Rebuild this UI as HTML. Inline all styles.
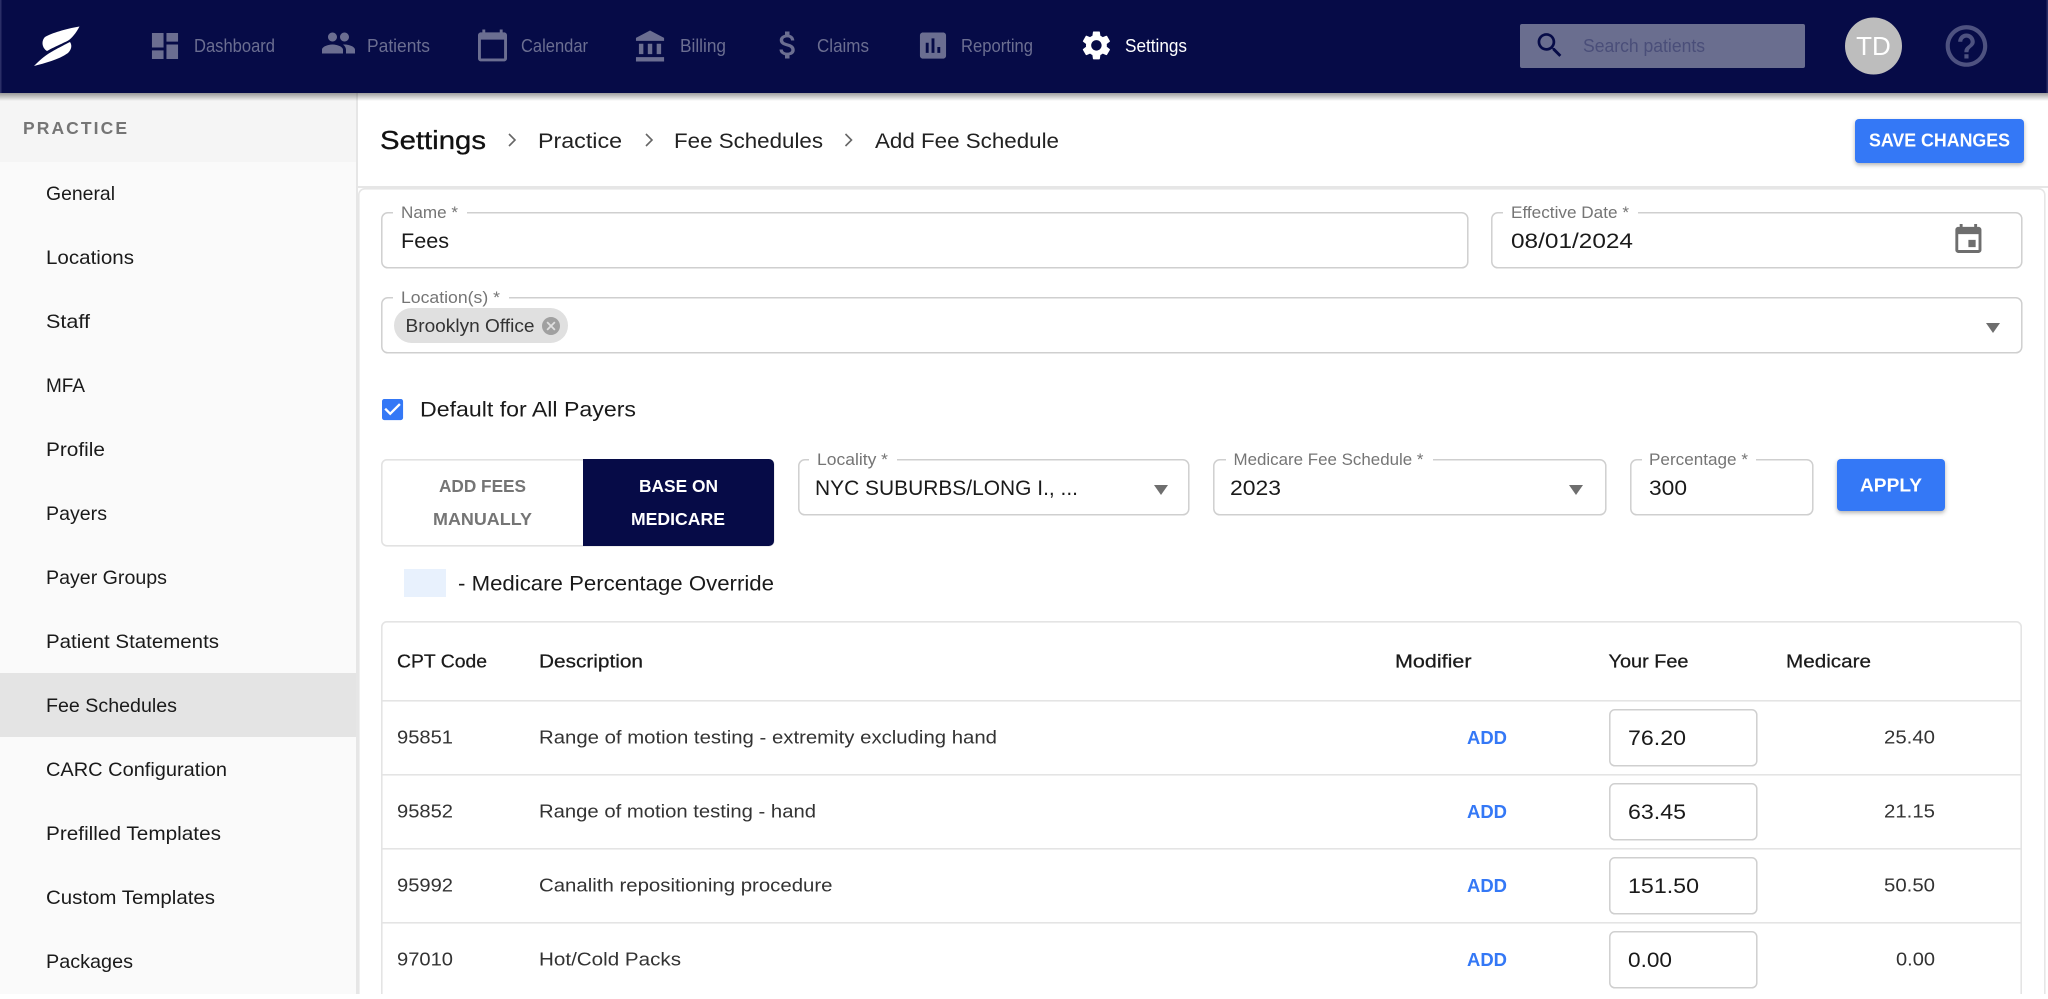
<!DOCTYPE html>
<html><head><meta charset="utf-8"><title>Add Fee Schedule</title>
<style>
html,body{margin:0;padding:0;background:#fff;width:2048px;height:999px;overflow:hidden}
svg{display:block;position:absolute;left:0;top:0}
text{font-family:"Liberation Sans",sans-serif;fill:#1c1c1c}
.nav{font-size:18px;fill:#6b6e91}
.side{font-size:19.5px;fill:#1a1a1a}
.lab{font-size:17px;fill:#757575}
.val{font-size:21px;fill:#1a1a1a}
.crumb{font-size:21px;fill:#222}
.th{font-size:18.5px;fill:#1a1a1a;stroke:#1a1a1a;stroke-width:.25}
.td{font-size:18.5px;fill:#333}
.add{font-size:18.5px;font-weight:bold;fill:#3478f6}
.f{fill:#fff;stroke:#cfcfcf;stroke-width:1.5}
.tg{font-size:17.5px;font-weight:bold}
.g{fill:#6b6e91}
</style></head><body>
<svg width="2048" height="999" viewBox="0 0 2048 999" xmlns="http://www.w3.org/2000/svg">
<defs>
<linearGradient id="sh" x1="0" y1="0" x2="0" y2="1"><stop offset="0" stop-color="#000" stop-opacity=".38"/><stop offset="1" stop-color="#000" stop-opacity="0"/></linearGradient>
</defs>
<rect width="2048" height="999" fill="#fff"/>
<!-- sidebar -->
<rect x="0" y="93" width="356" height="901" fill="#fafafa"/>
<rect x="0" y="93" width="356" height="69" fill="#f5f5f5"/>
<rect x="0" y="673" width="356" height="64" fill="#e4e4e4"/>
<rect x="356" y="93" width="2" height="901" fill="#e6e6e6"/>
<text x="23" y="134" font-size="17.5" font-weight="bold" style="fill:#757575" textLength="104" lengthAdjust="spacing">PRACTICE</text>
<text class="side" x="46" y="200" textLength="69" lengthAdjust="spacingAndGlyphs">General</text>
<text class="side" x="46" y="264" textLength="88" lengthAdjust="spacingAndGlyphs">Locations</text>
<text class="side" x="46" y="328" textLength="44" lengthAdjust="spacingAndGlyphs">Staff</text>
<text class="side" x="46" y="392" textLength="39" lengthAdjust="spacingAndGlyphs">MFA</text>
<text class="side" x="46" y="456" textLength="59" lengthAdjust="spacingAndGlyphs">Profile</text>
<text class="side" x="46" y="520" textLength="61" lengthAdjust="spacingAndGlyphs">Payers</text>
<text class="side" x="46" y="584" textLength="121" lengthAdjust="spacingAndGlyphs">Payer Groups</text>
<text class="side" x="46" y="648" textLength="173" lengthAdjust="spacingAndGlyphs">Patient Statements</text>
<text class="side" x="46" y="712" textLength="131" lengthAdjust="spacingAndGlyphs">Fee Schedules</text>
<text class="side" x="46" y="776" textLength="181" lengthAdjust="spacingAndGlyphs">CARC Configuration</text>
<text class="side" x="46" y="840" textLength="175" lengthAdjust="spacingAndGlyphs">Prefilled Templates</text>
<text class="side" x="46" y="904" textLength="169" lengthAdjust="spacingAndGlyphs">Custom Templates</text>
<text class="side" x="46" y="968" textLength="87" lengthAdjust="spacingAndGlyphs">Packages</text>

<!-- title bar -->
<rect x="358" y="186" width="1690" height="2" fill="#e6e6e6"/>
<rect x="358.8" y="188.8" width="1686" height="830" rx="6" fill="#fff" stroke="#e6e6e6" stroke-width="1.6"/>
<text x="380" y="149" font-size="26" font-weight="500" style="fill:#111;stroke:#111;stroke-width:.3" textLength="106" lengthAdjust="spacingAndGlyphs">Settings</text>
<path d="M509 134l6 6-6 6" fill="none" stroke="#666" stroke-width="1.6"/>
<text class="crumb" x="538" y="148" textLength="84" lengthAdjust="spacingAndGlyphs">Practice</text>
<path d="M646 134l6 6-6 6" fill="none" stroke="#666" stroke-width="1.6"/>
<text class="crumb" x="674" y="148" textLength="149" lengthAdjust="spacingAndGlyphs">Fee Schedules</text>
<path d="M845.500 134l6 6-6 6" fill="none" stroke="#666" stroke-width="1.6"/>
<text class="crumb" x="875" y="148" textLength="184" lengthAdjust="spacingAndGlyphs">Add Fee Schedule</text>
<rect x="1855" y="119" width="169" height="44" rx="4" fill="#3478f6" style="filter:drop-shadow(0 2px 2px rgba(0,0,0,.3))"/>
<text x="1869" y="146.500" font-size="18" font-weight="bold" style="fill:#fff" textLength="141" lengthAdjust="spacingAndGlyphs">SAVE CHANGES</text>

<!-- name/date -->
<rect class="f" x="381.800" y="212.800" width="1086" height="55" rx="6"/>
<rect x="393" y="208" width="74" height="8" fill="#fff"/>
<text class="lab" x="401" y="218" textLength="57" lengthAdjust="spacingAndGlyphs">Name *</text>
<text class="val" x="401" y="248" textLength="48" lengthAdjust="spacingAndGlyphs">Fees</text>
<rect class="f" x="1491.800" y="212.800" width="530" height="55" rx="6"/>
<rect x="1503" y="208" width="135" height="8" fill="#fff"/>
<text class="lab" x="1511" y="218" textLength="118" lengthAdjust="spacingAndGlyphs">Effective Date *</text>
<text class="val" x="1511" y="248" textLength="122" lengthAdjust="spacingAndGlyphs">08/01/2024</text>
<g transform="translate(1951 222.500) scale(1.45)"><path fill="#6e6e6e" d="M17 12h-5v5h5v-5zM16 1v2H8V1H6v2H5c-1.11 0-1.99.9-1.99 2L3 19c0 1.1.89 2 2 2h14c1.1 0 2-.9 2-2V5c0-1.1-.9-2-2-2h-1V1h-2zm3 18H5V8h14v11z"/></g>

<!-- locations -->
<rect class="f" x="381.800" y="297.800" width="1640" height="55" rx="6"/>
<rect x="393" y="293" width="116" height="8" fill="#fff"/>
<text class="lab" x="401" y="303" textLength="99" lengthAdjust="spacingAndGlyphs">Location(s) *</text>
<rect x="394" y="308" width="174" height="35" rx="17.500" fill="#e0e0e0"/>
<text x="405.500" y="332" font-size="18" style="fill:#333" textLength="129" lengthAdjust="spacingAndGlyphs">Brooklyn Office</text>
<g transform="translate(540.200 315.200) scale(.9)"><path fill="#a0a0a0" d="M12 2C6.47 2 2 6.47 2 12s4.47 10 10 10 10-4.47 10-10S17.53 2 12 2zm5 13.59L15.59 17 12 13.41 8.41 17 7 15.59 10.59 12 7 8.41 8.41 7 12 10.59 15.59 7 17 8.41 13.41 12 17 15.59z"/></g>
<path d="M1986 323h14l-7 10z" fill="#6e6e6e"/>

<!-- checkbox -->
<g transform="translate(378.500 395.500) scale(1.17)"><path fill="#3478f6" d="M19 3H5c-1.11 0-2 .9-2 2v14c0 1.1.89 2 2 2h14c1.11 0 2-.9 2-2V5c0-1.1-.89-2-2-2zm-9 14l-5-5 1.41-1.41L10 14.17l7.59-7.59L19 8l-9 9z"/></g>
<text class="val" x="420" y="416.500" textLength="216" lengthAdjust="spacingAndGlyphs">Default for All Payers</text>

<!-- toggle -->
<rect x="381.800" y="459.800" width="392" height="86" rx="5" fill="#fff" stroke="#e2e2e2" stroke-width="1.6"/>
<path d="M583 459h186a5 5 0 0 1 5 5v77a5 5 0 0 1-5 5H583z" fill="#060b47"/>
<text class="tg" x="439" y="492" style="fill:#757575" textLength="87" lengthAdjust="spacingAndGlyphs">ADD FEES</text>
<text class="tg" x="433" y="525" style="fill:#757575" textLength="99" lengthAdjust="spacingAndGlyphs">MANUALLY</text>
<text class="tg" x="639" y="492" style="fill:#fff" textLength="79" lengthAdjust="spacingAndGlyphs">BASE ON</text>
<text class="tg" x="631" y="525" style="fill:#fff" textLength="94" lengthAdjust="spacingAndGlyphs">MEDICARE</text>

<rect class="f" x="798.800" y="459.800" width="390" height="55" rx="6"/>
<rect x="809" y="455" width="88" height="8" fill="#fff"/>
<text class="lab" x="817" y="465" textLength="71" lengthAdjust="spacingAndGlyphs">Locality *</text>
<text class="val" x="815" y="495" textLength="263" lengthAdjust="spacingAndGlyphs">NYC SUBURBS/LONG I., ...</text>
<path d="M1154 485h14l-7 10z" fill="#6e6e6e"/>

<rect class="f" x="1213.800" y="459.800" width="392" height="55" rx="6"/>
<rect x="1226" y="455" width="207" height="8" fill="#fff"/>
<text class="lab" x="1233.500" y="465" textLength="190" lengthAdjust="spacingAndGlyphs">Medicare Fee Schedule *</text>
<text class="val" x="1230" y="495" textLength="51" lengthAdjust="spacingAndGlyphs">2023</text>
<path d="M1569 485h14l-7 10z" fill="#6e6e6e"/>

<rect class="f" x="1630.800" y="459.800" width="182" height="55" rx="6"/>
<rect x="1642" y="455" width="114" height="8" fill="#fff"/>
<text class="lab" x="1649" y="465" textLength="99" lengthAdjust="spacingAndGlyphs">Percentage *</text>
<text class="val" x="1649" y="495" textLength="38" lengthAdjust="spacingAndGlyphs">300</text>

<rect x="1837" y="459" width="108" height="52" rx="4" fill="#3478f6" style="filter:drop-shadow(0 2px 2px rgba(0,0,0,.3))"/>
<text x="1860" y="491.500" font-size="18" font-weight="bold" style="fill:#fff" textLength="62" lengthAdjust="spacingAndGlyphs">APPLY</text>

<!-- legend -->
<rect x="404" y="569" width="42" height="28" fill="#e8f1fd"/>
<text class="val" x="458" y="590.500" textLength="316" lengthAdjust="spacingAndGlyphs">- Medicare Percentage Override</text>

<!-- table -->
<rect x="381.800" y="621.800" width="1639.400" height="400" rx="5" fill="#fff" stroke="#e4e4e4" stroke-width="1.6"/>
<g fill="#e4e4e4"><rect x="382" y="700" width="1639" height="1.6"/><rect x="382" y="774" width="1639" height="1.6"/><rect x="382" y="848" width="1639" height="1.6"/><rect x="382" y="922" width="1639" height="1.6"/></g>
<text class="th" x="397" y="667.500" textLength="90" lengthAdjust="spacingAndGlyphs">CPT Code</text>
<text class="th" x="539" y="667.500" textLength="104" lengthAdjust="spacingAndGlyphs">Description</text>
<text class="th" x="1395" y="667.500" textLength="76.500" lengthAdjust="spacingAndGlyphs">Modifier</text>
<text class="th" x="1608.500" y="667.500" textLength="80" lengthAdjust="spacingAndGlyphs">Your Fee</text>
<text class="th" x="1786" y="667.500" textLength="85" lengthAdjust="spacingAndGlyphs">Medicare</text>

<text class="td" x="397" y="743.500" textLength="56" lengthAdjust="spacingAndGlyphs">95851</text>
<text class="td" x="539" y="743.500" textLength="458" lengthAdjust="spacingAndGlyphs">Range of motion testing - extremity excluding hand</text>
<text class="add" x="1467" y="744" textLength="40" lengthAdjust="spacingAndGlyphs">ADD</text>
<rect class="f" x="1609.800" y="709.800" width="147" height="56" rx="5"/>
<text class="val" x="1628" y="745" textLength="58" lengthAdjust="spacingAndGlyphs">76.20</text>
<text class="td" x="1884" y="743.500" textLength="51" lengthAdjust="spacingAndGlyphs">25.40</text>

<text class="td" x="397" y="817.500" textLength="56" lengthAdjust="spacingAndGlyphs">95852</text>
<text class="td" x="539" y="817.500" textLength="277" lengthAdjust="spacingAndGlyphs">Range of motion testing - hand</text>
<text class="add" x="1467" y="818" textLength="40" lengthAdjust="spacingAndGlyphs">ADD</text>
<rect class="f" x="1609.800" y="783.800" width="147" height="56" rx="5"/>
<text class="val" x="1628" y="819" textLength="58" lengthAdjust="spacingAndGlyphs">63.45</text>
<text class="td" x="1884" y="817.500" textLength="51" lengthAdjust="spacingAndGlyphs">21.15</text>

<text class="td" x="397" y="891.500" textLength="56" lengthAdjust="spacingAndGlyphs">95992</text>
<text class="td" x="539" y="891.500" textLength="293.500" lengthAdjust="spacingAndGlyphs">Canalith repositioning procedure</text>
<text class="add" x="1467" y="892" textLength="40" lengthAdjust="spacingAndGlyphs">ADD</text>
<rect class="f" x="1609.800" y="857.800" width="147" height="56" rx="5"/>
<text class="val" x="1628" y="893" textLength="71" lengthAdjust="spacingAndGlyphs">151.50</text>
<text class="td" x="1884" y="891.500" textLength="51" lengthAdjust="spacingAndGlyphs">50.50</text>

<text class="td" x="397" y="965.500" textLength="56" lengthAdjust="spacingAndGlyphs">97010</text>
<text class="td" x="539" y="965.500" textLength="142" lengthAdjust="spacingAndGlyphs">Hot/Cold Packs</text>
<text class="add" x="1467" y="966" textLength="40" lengthAdjust="spacingAndGlyphs">ADD</text>
<rect class="f" x="1609.800" y="931.800" width="147" height="56" rx="5"/>
<text class="val" x="1628" y="967" textLength="44" lengthAdjust="spacingAndGlyphs">0.00</text>
<text class="td" x="1896" y="965.500" textLength="39" lengthAdjust="spacingAndGlyphs">0.00</text>

<rect x="0" y="994" width="2048" height="5" fill="#fff"/>

<!-- header -->
<rect x="0" y="93" width="2048" height="8" fill="url(#sh)"/>
<rect x="0" y="0" width="2048" height="93" fill="#060b47"/>
<rect x="0" y="0" width="1.500" height="93" fill="#2a2e66"/>
<rect x="2046.500" y="0" width="1.500" height="93" fill="#2a2e66"/>
<path fill="#fff" d="M79.500 26.500C65 29 52 33 45 37C41 41 42 48 47 51C56 46 66 42 69 40C74 36 77 31 79.500 26.500Z"/>
<path fill="#fff" d="M34 66C45 63 58 60 68 53C72 49 72 45 70 42C60 47 51 52 48 54C42 58 38 62 34 66Z"/>

<g class="g" transform="translate(147.600 28.600) scale(1.45)"><path d="M3 13h8V3H3v10zm0 8h8v-6H3v6zm10 0h8V11h-8v10zm0-18v6h8V3h-8z"/></g>
<text class="nav" x="194" y="52" textLength="81" lengthAdjust="spacingAndGlyphs">Dashboard</text>
<g class="g" transform="translate(320.500 25) scale(1.5)"><path d="M16 11c1.66 0 2.99-1.34 2.99-3S17.66 5 16 5c-1.66 0-3 1.34-3 3s1.34 3 3 3zm-8 0c1.66 0 2.99-1.34 2.99-3S9.66 5 8 5C6.34 5 5 6.34 5 8s1.34 3 3 3zm0 2c-2.33 0-7 1.17-7 3.5V19h14v-2.500c0-2.33-4.67-3.5-7-3.5zm8 0c-.29 0-.62.02-.97.05 1.16.84 1.97 1.97 1.97 3.45V19h6v-2.500c0-2.33-4.67-3.5-7-3.5z"/></g>
<text class="nav" x="367" y="52" textLength="63" lengthAdjust="spacingAndGlyphs">Patients</text>
<g class="g" transform="translate(475.100 28) scale(1.45)"><path d="M20 3h-1V1h-2v2H7V1H5v2H4c-1.1 0-2 .9-2 2v16c0 1.1.9 2 2 2h16c1.1 0 2-.9 2-2V5c0-1.1-.9-2-2-2zm0 18H4V8h16v13z"/></g>
<text class="nav" x="521" y="52" textLength="67" lengthAdjust="spacingAndGlyphs">Calendar</text>
<g class="g" transform="translate(633 29) scale(1.48)"><path d="M4 10v7h3v-7H4zm6 0v7h3v-7h-3zM2 22h19v-3H2v3zm14-12v7h3v-7h-3zm-4.500-9L2 6v2h19V6l-9.500-5z"/></g>
<text class="nav" x="680" y="52" textLength="46" lengthAdjust="spacingAndGlyphs">Billing</text>
<g class="g" transform="translate(770 27) scale(1.5)"><path d="M11.8 10.9c-2.27-.59-3-1.2-3-2.15 0-1.09 1.01-1.85 2.7-1.85 1.78 0 2.44.85 2.5 2.1h2.21c-.07-1.72-1.12-3.3-3.21-3.81V3h-3v2.16c-1.94.42-3.5 1.68-3.5 3.61 0 2.31 1.91 3.46 4.7 4.13 2.5.6 3 1.48 3 2.41 0 .69-.49 1.79-2.7 1.79-2.06 0-2.87-.92-2.98-2.1h-2.2c.12 2.19 1.76 3.42 3.68 3.83V21h3v-2.15c1.95-.37 3.5-1.5 3.5-3.55 0-2.84-2.43-3.81-4.7-4.4z"/></g>
<text class="nav" x="817" y="52" textLength="52" lengthAdjust="spacingAndGlyphs">Claims</text>
<g class="g" transform="translate(915.600 28.200) scale(1.45)"><path d="M19 3H5c-1.1 0-2 .9-2 2v14c0 1.1.9 2 2 2h14c1.1 0 2-.9 2-2V5c0-1.1-.9-2-2-2zM9 17H7v-7h2v7zm4 0h-2V7h2v10zm4 0h-2v-4h2v4z"/></g>
<text class="nav" x="961" y="52" textLength="72" lengthAdjust="spacingAndGlyphs">Reporting</text>
<g transform="translate(1079 28) scale(1.45)"><path fill="#fff" d="M19.14 12.94c.04-.3.06-.61.06-.94 0-.32-.02-.64-.07-.94l2.03-1.58c.18-.14.23-.41.12-.61l-1.92-3.32c-.12-.22-.37-.29-.59-.22l-2.39.96c-.5-.38-1.03-.7-1.62-.94l-.36-2.54c-.04-.24-.24-.41-.48-.41h-3.84c-.24 0-.43.17-.47.41l-.36 2.54c-.59.24-1.13.57-1.62.94l-2.39-.96c-.22-.08-.47 0-.59.22L2.74 8.87c-.12.21-.08.47.12.61l2.03 1.58c-.05.3-.09.63-.09.94s.02.64.07.94l-2.03 1.58c-.18.14-.23.41-.12.61l1.92 3.32c.12.22.37.29.59.22l2.39-.96c.5.38 1.03.7 1.62.94l.36 2.54c.05.24.24.41.48.41h3.84c.24 0 .44-.17.47-.41l.36-2.54c.59-.24 1.13-.56 1.62-.94l2.39.96c.22.08.47 0 .59-.22l1.92-3.32c.12-.22.07-.47-.12-.61l-2.01-1.58zM12 15.6c-1.98 0-3.6-1.62-3.6-3.6s1.62-3.6 3.6-3.6 3.6 1.62 3.6 3.6-1.62 3.6-3.6 3.6z"/></g>
<text x="1125" y="52" font-size="18" style="fill:#fff" textLength="62" lengthAdjust="spacingAndGlyphs">Settings</text>

<rect x="1520" y="24" width="285" height="44" rx="2" fill="#6a6e8f"/>
<g transform="translate(1533.500 29) scale(1.36)"><path fill="#060b47" d="M15.5 14h-.79l-.28-.27C15.41 12.59 16 11.11 16 9.5 16 5.91 13.09 3 9.5 3S3 5.91 3 9.5 5.91 16 9.5 16c1.61 0 3.09-.59 4.23-1.57l.27.28v.79l5 4.99L20.49 19l-4.99-5zm-6 0C7.01 14 5 11.99 5 9.5S7.01 5 9.5 5 14 7.01 14 9.5 11.99 14 9.5 14z"/></g>
<text x="1583" y="52" font-size="18" style="fill:#4a4e79" textLength="122" lengthAdjust="spacingAndGlyphs">Search patients</text>
<circle cx="1873.500" cy="46" r="28.500" fill="#bdbdbd"/>
<text x="1873.500" y="55" font-size="26" text-anchor="middle" style="fill:#fff">TD</text>
<g transform="translate(1941.500 21) scale(2.08)"><path fill="#4e5280" d="M11 18h2v-2h-2v2zm1-16C6.48 2 2 6.48 2 12s4.48 10 10 10 10-4.48 10-10S17.52 2 12 2zm0 18c-4.41 0-8-3.59-8-8s3.59-8 8-8 8 3.59 8 8-3.59 8-8 8zm0-14c-2.21 0-4 1.79-4 4h2c0-1.1.9-2 2-2s2 .9 2 2c0 2-3 1.75-3 5h2c0-2.25 3-2.5 3-5 0-2.21-1.79-4-4-4z"/></g>
</svg>
</body></html>
